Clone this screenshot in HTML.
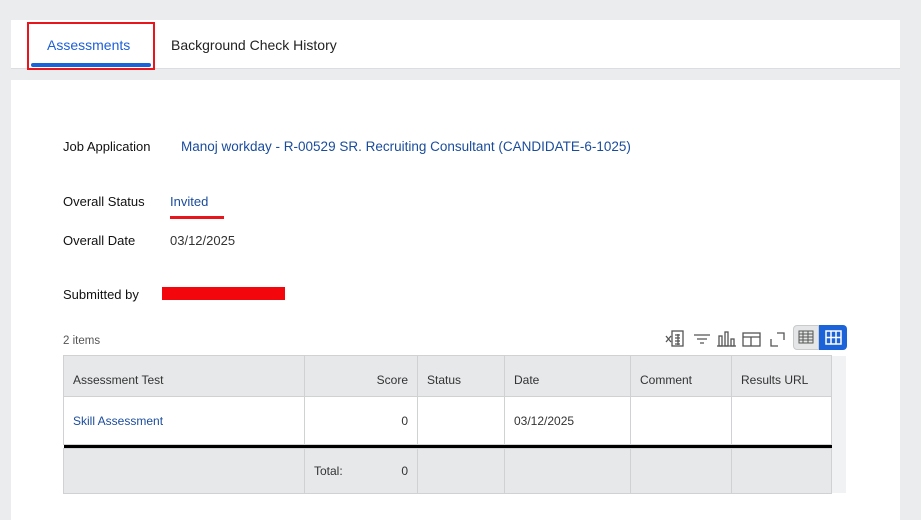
<!DOCTYPE html>
<html><head><style>
body{margin:0;width:921px;height:515px;background:#ebecee;font-family:"Liberation Sans",Arial,sans-serif;position:relative;overflow:hidden;color:#333}
.a{position:absolute}
.lnk{color:#1a4c9c}
td{border:1px solid #cfd1d3;font-size:12px;padding:0 9px;box-sizing:border-box}
.lb{font-size:13px;color:#111}
</style></head><body>
<div class="a" style="left:11px;top:20px;width:889px;height:48px;background:#fff;border-bottom:1px solid #dcdde0"></div>
<div class="a" style="left:47px;top:37px;font-size:14px;color:#1d5fd8">Assessments</div>
<div class="a" style="left:171px;top:37px;font-size:14px;color:#222">Background Check History</div>
<div class="a" style="left:31px;top:63px;width:120px;height:4px;background:#1a63d9;border-radius:2px"></div>
<div class="a" style="left:27px;top:22px;width:124px;height:44px;border:2px solid #e8161c"></div>
<div class="a" style="left:11px;top:80px;width:889px;height:440px;background:#fff"></div>
<div class="a lb" style="left:63px;top:139px">Job Application</div>
<div class="a lnk" style="left:181px;top:139px;font-size:13.5px">Manoj workday - R-00529 SR. Recruiting Consultant (CANDIDATE-6-1025)</div>
<div class="a lb" style="left:63px;top:194px">Overall Status</div>
<div class="a lnk" style="left:170px;top:194px;font-size:13px">Invited</div>
<div class="a" style="left:170px;top:216px;width:54px;height:3px;background:#e8161c"></div>
<div class="a lb" style="left:63px;top:233px">Overall Date</div>
<div class="a" style="left:170px;top:233px;font-size:13px;color:#333">03/12/2025</div>
<div class="a lb" style="left:63px;top:287px">Submitted by</div>
<div class="a" style="left:162px;top:287px;width:123px;height:13px;background:#f3060c"></div>
<div class="a" style="left:63px;top:335px;font-size:11.5px;color:#555">2 items</div>
<svg class="a" style="left:660px;top:328px" width="130" height="22" fill="none" stroke="#555" stroke-width="1.3">
<rect x="12" y="3" width="11" height="15"/><path d="M15 7h5M15 10h5M15 13h5M15 16h5M18 6v11"/><path d="M6 8l5 6M11 8l-5 6"/>
<path d="M34 7h16M37 11h10M40 15h4"/>
<rect x="59" y="8" width="3" height="10"/><rect x="65" y="4" width="3" height="14"/><rect x="71" y="11" width="3" height="7"/><path d="M57 18h19"/>
<rect x="83" y="5" width="17" height="13"/><path d="M83 9h17M91 9v9"/>
<path d="M111 11v7h7M117 5h7v7"/>
</svg>
<div class="a" style="left:793px;top:325px;width:26px;height:25px;background:#e4e6e8;border:1px solid #c8cacc;border-radius:4px 0 0 4px;box-sizing:border-box"></div>
<svg class="a" style="left:798px;top:330px" width="16" height="15" fill="none" stroke="#555" stroke-width="1"><rect x="1" y="1" width="14" height="12"/><path d="M1 4h14M1 7h14M1 10h14M5 1v12M10 1v12"/></svg>
<div class="a" style="left:819px;top:325px;width:28px;height:25px;background:#1a63d9;border-radius:0 4px 4px 0"></div>
<svg class="a" style="left:825px;top:330px" width="17" height="15" fill="none" stroke="#fff" stroke-width="1.5"><rect x="1" y="1" width="15" height="13"/><path d="M1 7.5h15M6 1v13M11 1v13"/></svg>
<div class="a" style="left:831px;top:356px;width:15px;height:137px;background:#f1f2f3"></div>
<table class="a" style="left:63px;top:355px;border-collapse:collapse;width:769px">
<tr style="height:41px;background:#e6e8ea"><td style="width:241px;padding-top:8px">Assessment Test</td><td style="width:113px;text-align:right;padding-top:8px">Score</td><td style="width:87px;padding-top:8px">Status</td><td style="width:126px;padding-top:8px">Date</td><td style="width:101px;padding-top:8px">Comment</td><td style="padding-top:8px">Results URL</td></tr>
<tr style="height:48px"><td class="lnk">Skill Assessment</td><td style="text-align:right">0</td><td></td><td>03/12/2025</td><td></td><td></td></tr>
<tr style="height:4px"><td colspan="6" style="background:#000;border:0;padding:0;height:4px"></td></tr>
<tr style="height:45px;background:#e6e8ea"><td></td><td>Total:<span style="float:right">0</span></td><td></td><td></td><td></td><td></td></tr>
</table>
</body></html>
